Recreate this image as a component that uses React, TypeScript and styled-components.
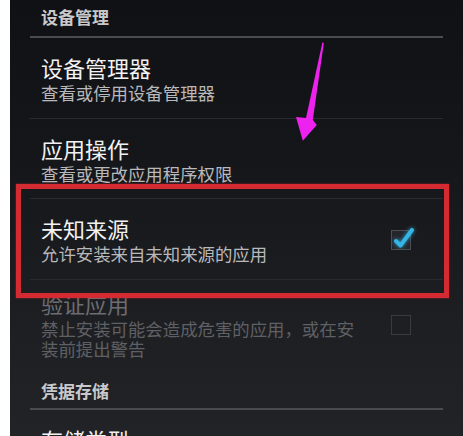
import styled, { createGlobalStyle } from "styled-components";

const GlobalStyle = createGlobalStyle`
  html, body {
    margin: 0;
    padding: 0;
    background: #ffffff;
  }
  body {
    font-family: "Noto Sans CJK SC", "Noto Sans", sans-serif;
  }
`;

const Page = styled.div`
  display: flex;
  width: 463px;
  height: 436px;
  overflow: hidden;
  background: #ffffff;
`;

const Screen = styled.div`
  position: relative;
  flex: 1;
  margin-left: 10px;
  height: 436px;
  overflow: hidden;
  background: linear-gradient(180deg, #101115 0%, #15161a 35%, #1e1f23 75%, #222327 100%);
`;

const List = styled.div`
  display: flex;
  flex-direction: column;
  margin: 0 20px;
`;

const Header = styled.div<{ $top: number; $bottom: number }>`
  padding: ${(p) => `${p.$top}px 11px ${p.$bottom}px`};
  font-size: 17px;
  line-height: 20px;
  font-weight: 700;
  color: #c9c9cb;
  border-bottom: 2px solid #4a4b4f;
`;

const Row = styled.div<{ $top?: number; $bottom?: number; $divider?: boolean }>`
  display: flex;
  align-items: center;
  padding: ${(p) => `${p.$top ?? 16}px 32px ${p.$bottom ?? 14}px 11px`};
  border-bottom: ${(p) => (p.$divider === false ? "none" : "1px solid #2a2b2f")};
`;

const Texts = styled.div`
  flex: 1;
  display: flex;
  flex-direction: column;
  gap: 3px;
`;

const Title = styled.div<{ $disabled?: boolean }>`
  font-size: 22px;
  line-height: 26px;
  color: ${(p) => (p.$disabled ? "#6c6d71" : "#f2f2f2")};
`;

const Summary = styled.div<{ $disabled?: boolean }>`
  font-size: 17.4px;
  line-height: 20.5px;
  color: ${(p) => (p.$disabled ? "#5f6064" : "#b9b9bb")};
  max-width: 318px;
`;

const CheckBox = styled.div<{ $checked?: boolean }>`
  position: relative;
  width: 18px;
  height: 18px;
  border: 1.5px solid ${(p) => (p.$checked ? "#4b4d52" : "#3a3b3f")};
  background: ${(p) => (p.$checked ? "#24262b" : "transparent")};
  flex-shrink: 0;

  svg {
    position: absolute;
    left: -1px;
    top: -6px;
  }
`;

const Highlight = styled.div`
  position: absolute;
  left: 6px;
  top: 184px;
  width: 423px;
  height: 104px;
  border: 5px solid #d42a31;
  box-shadow: 0 0 2px rgba(212, 42, 49, 0.6);
  pointer-events: none;
`;

const Arrow = styled.svg`
  position: absolute;
  left: 270px;
  top: 30px;
`;

function Check() {
  return (
    <svg width="26" height="24" viewBox="0 0 26 24">
      <path
        d="M5 16 L9.5 20.5 L21 5"
        fill="none"
        stroke="#33b5e5"
        strokeWidth="4"
        strokeLinecap="round"
        strokeLinejoin="round"
        style={{ filter: "drop-shadow(0 0 2px rgba(51,181,229,0.8))" }}
      />
    </svg>
  );
}

export default function App() {
  return (
    <>
      <GlobalStyle />
      <Page>
        <Screen>
          <List>
            <Header $top={7} $bottom={9}>设备管理</Header>
            <Row>
              <Texts>
                <Title>设备管理器</Title>
                <Summary>查看或停用设备管理器</Summary>
              </Texts>
            </Row>
            <Row>
              <Texts>
                <Title>应用操作</Title>
                <Summary>查看或更改应用程序权限</Summary>
              </Texts>
            </Row>
            <Row>
              <Texts>
                <Title>未知来源</Title>
                <Summary>允许安装来自未知来源的应用</Summary>
              </Texts>
              <CheckBox $checked>
                <Check />
              </CheckBox>
            </Row>
            <Row $top={10} $bottom={9} $divider={false}>
              <Texts>
                <Title $disabled>验证应用</Title>
                <Summary $disabled>禁止安装可能会造成危害的应用，或在安装前提出警告</Summary>
              </Texts>
              <CheckBox />
            </Row>
            <Header $top={12} $bottom={7}>凭据存储</Header>
            <Row>
              <Texts>
                <Title>存储类型</Title>
              </Texts>
            </Row>
          </List>
          <Highlight />
          <Arrow width="60" height="120" viewBox="0 0 60 120">
            <polygon
              points="42.5,12 43.8,13.2 32.8,90 36.8,95 22.8,110.8 16,87 26,88"
              fill="#ee22ee"
            />
          </Arrow>
        </Screen>
      </Page>
    </>
  );
}
